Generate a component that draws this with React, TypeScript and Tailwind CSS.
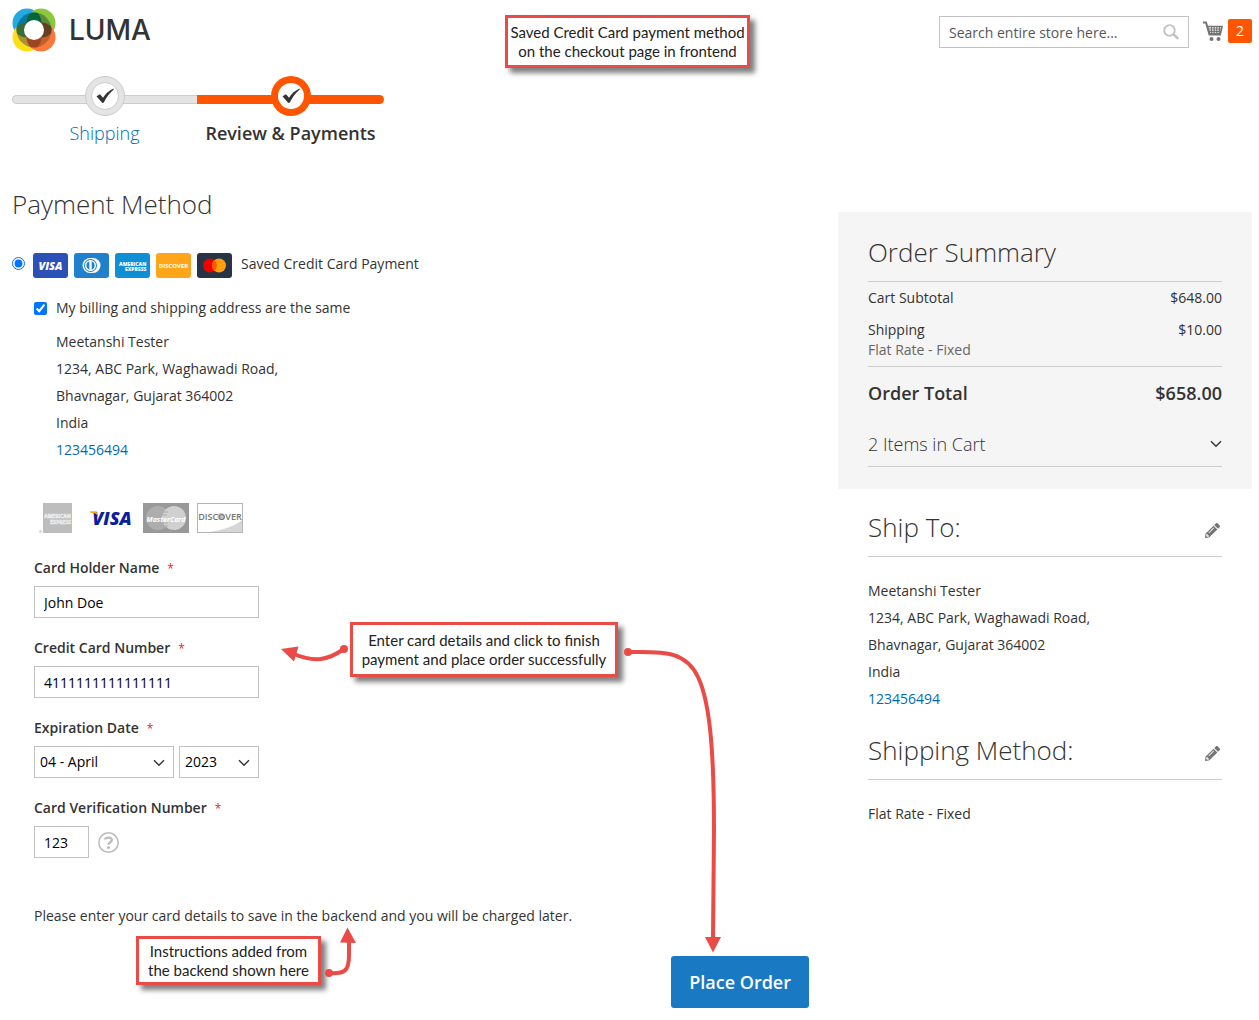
import React, { useState } from 'react';
import { FaPencilAlt } from 'react-icons/fa';

const address = ['Meetanshi Tester', '1234, ABC Park, Waghawadi Road,', 'Bhavnagar, Gujarat 364002', 'India'];

const months = [
  '01 - January', '02 - February', '03 - March', '04 - April', '05 - May', '06 - June',
  '07 - July', '08 - August', '09 - September', '10 - October', '11 - November', '12 - December',
];

const years = ['2022', '2023', '2024', '2025', '2026', '2027'];

const inputClass = 'h-8 border border-[#c2c2c2] bg-white px-[9px] text-sm text-black focus:outline-none';

const LumaLogo = () => (
  <a href="/" aria-label="Luma" className="flex items-center gap-[13px]">
    <svg width="44" height="44" viewBox="0 0 44 44">
      <defs>
        <clipPath id="core"><circle cx="22" cy="22" r="17.5" /></clipPath>
        <clipPath id="blue"><circle cx="15" cy="15" r="14.5" /></clipPath>
        <clipPath id="green"><circle cx="29" cy="15" r="14.5" /></clipPath>
        <clipPath id="yellow"><circle cx="15" cy="29" r="14.5" /></clipPath>
      </defs>
      <circle cx="15" cy="15" r="14.5" fill="#26a9e0" />
      <circle cx="29" cy="15" r="14.5" fill="#8dc63f" />
      <circle cx="15" cy="29" r="14.5" fill="#ffde17" />
      <circle cx="29" cy="29" r="14.5" fill="#f9793a" />
      <g clipPath="url(#core)">
        <rect x="0" y="0" width="22" height="22" fill="#0a7aa5" />
        <rect x="22" y="0" width="22" height="22" fill="#5a8a3c" />
        <rect x="0" y="22" width="22" height="22" fill="#a89234" />
        <rect x="22" y="22" width="22" height="22" fill="#c25f30" />
        <circle cx="29" cy="15" r="14.5" fill="#006838" clipPath="url(#blue)" />
        <circle cx="15" cy="29" r="14.5" fill="#3c6b35" clipPath="url(#blue)" />
        <circle cx="29" cy="29" r="14.5" fill="#64401f" clipPath="url(#green)" />
        <circle cx="29" cy="29" r="14.5" fill="#9e4420" clipPath="url(#yellow)" />
      </g>
      <circle cx="22" cy="22" r="10" fill="#fff" />
    </svg>
    <span className="font-[Inter,sans-serif] text-[28px] leading-8 font-medium text-[#333]">LUMA</span>
  </a>
);

const CartIcon = () => (
  <svg width="20" height="21" viewBox="0 0 20 21" fill="none" stroke="#757575">
    <path d="M0 1.5h3l3.500 12h11.500" strokeWidth="2" />
    <path d="M4.500 5.500h14.500l-1.500 7H6.500z" strokeWidth="1.600" />
    <path d="M5 8h14M6 10.300h12M8.500 5.500v7M11.200 5.500v7M13.800 5.500v7M16.400 5.500v7" strokeWidth="1.200" />
    <circle cx="8.500" cy="18" r="2" fill="#757575" stroke="none" />
    <circle cx="15.500" cy="18" r="2" fill="#757575" stroke="none" />
  </svg>
);

const Chevron = ({ className = '' }: { className?: string }) => (
  <svg className={className} width="12" height="8" viewBox="0 0 12 8" fill="none" stroke="#333" strokeWidth="1.400">
    <path d="M1 1.200l5 5 5-5" />
  </svg>
);

const Tick = () => (
  <svg width="18" height="16" viewBox="0 0 18 16" fill="#333">
    <path d="M.5 8.200l3.500-2 3 3.600C9.500 6 12.500 2.800 17.500.5L17.800 1.500C13.500 5 10.500 9 7.800 14.500L6.300 15z" />
  </svg>
);

const Step = ({ label, active }: { label: string; active?: boolean }) => (
  <li className={`relative pt-[19px] text-center ${active ? 'w-[187px]' : 'w-[185px]'}`}>
    <div
      className={
        active
          ? 'h-[9px] rounded-r-md bg-[#ff5501]'
          : 'h-[9px] rounded-l-md border border-r-0 border-[#ccc] bg-[#e4e4e4]'
      }
    />
    <span
      className={`absolute top-0 left-1/2 flex size-10 -translate-x-1/2 items-center justify-center rounded-full ${
        active ? 'bg-[#ff5501]' : 'border border-[#ccc] bg-[#e4e4e4]'
      }`}
    >
      <span
        className={`flex items-center justify-center rounded-full bg-white ${
          active ? 'size-[26px]' : 'size-7 border border-[#ccc]'
        }`}
      >
        <Tick />
      </span>
    </span>
    <div className="pt-[17px] text-lg leading-[25px]">
      {active ? (
        <span className="font-semibold">{label}</span>
      ) : (
        <a href="#shipping" className="font-light text-[#006bb4]">{label}</a>
      )}
    </div>
  </li>
);

const BrandCards = () => (
  <span className="flex gap-[6px]">
    <svg width="35" height="25" viewBox="0 0 35 25">
      <rect width="35" height="25" rx="3" fill="#2b50b8" />
      <text x="17.500" y="17" textAnchor="middle" fontFamily="Open Sans" fontSize="11" fontWeight="800" fontStyle="italic" fill="#fff">VISA</text>
    </svg>
    <svg width="35" height="25" viewBox="0 0 35 25">
      <rect width="35" height="25" rx="3" fill="#2180cc" />
      <path d="M16 5h3a7.500 7.500 0 0 1 0 15h-3a7.500 7.500 0 0 1 0-15z" fill="#fff" />
      <circle cx="16.500" cy="12.500" r="6.500" fill="#2180cc" />
      <circle cx="16.500" cy="12.500" r="5.500" fill="#fff" />
      <path d="M15.300 8.300a4.500 4.500 0 0 0 0 8.400zM17.700 8.300a4.500 4.500 0 0 1 0 8.400z" fill="#2180cc" />
    </svg>
    <svg width="35" height="25" viewBox="0 0 35 25">
      <rect width="35" height="25" rx="3" fill="#0f8fd6" />
      <text x="4" y="12.500" fontFamily="Open Sans" fontSize="5" fontWeight="800" fill="#fff">AMERICAN</text>
      <text x="10" y="17.500" fontFamily="Open Sans" fontSize="5" fontWeight="800" fill="#fff">EXPRESS</text>
    </svg>
    <svg width="35" height="25" viewBox="0 0 35 25">
      <rect width="35" height="25" rx="3" fill="#ffa51a" />
      <text x="17.500" y="14.500" textAnchor="middle" fontFamily="Open Sans" fontSize="6" fontWeight="700" fill="#fff">DISCOVER</text>
    </svg>
    <svg width="35" height="25" viewBox="0 0 35 25">
      <rect width="35" height="25" rx="3" fill="#263445" />
      <circle cx="13" cy="12.500" r="7" fill="#f00000" />
      <circle cx="22" cy="12.500" r="7" fill="#ff9f0f" />
      <path d="M17.500 7.100a7 7 0 0 1 0 10.800 7 7 0 0 1 0-10.800z" fill="#ff5a00" />
    </svg>
  </span>
);

const AcceptedCards = () => (
  <ul className="flex gap-2">
    <li>
      <svg width="46" height="30" viewBox="0 0 46 30" role="img" aria-label="American Express">
        <rect x="8" width="29" height="30" fill="#bdbdbd" />
        <circle cx="5.500" cy="28.500" r="1.200" fill="#ccc" />
        <text x="22.500" y="15" textAnchor="middle" fontFamily="Open Sans" fontSize="5" fontWeight="700" fill="none" stroke="#f2f2f2" strokeWidth="0.500">AMERICAN</text>
        <text x="25.500" y="21" textAnchor="middle" fontFamily="Open Sans" fontSize="5" fontWeight="700" fill="none" stroke="#f2f2f2" strokeWidth="0.500">EXPRESS</text>
      </svg>
    </li>
    <li>
      <svg width="46" height="30" viewBox="0 0 46 30" role="img" aria-label="Visa">
        <path d="M1 8.500h6.500l2.500 7C8 12 5 9.800 1 9.200z" fill="#f7a823" />
        <text x="23" y="22" textAnchor="middle" fontFamily="Open Sans" fontSize="18" fontWeight="800" fontStyle="italic" fill="#0a1f9c">VISA</text>
        <path d="M1 8.500h6.500l1 3.500C6.500 10.300 4 9.500 1 9.200z" fill="#f7a823" />
      </svg>
    </li>
    <li>
      <svg width="46" height="30" viewBox="0 0 46 30" role="img" aria-label="MasterCard">
        <rect width="46" height="30" fill="#999" />
        <circle cx="15" cy="15" r="12" fill="#adadad" />
        <circle cx="31" cy="15" r="12" fill="#d0d0d0" />
        <path d="M19.500 9H25M19 12h5M19 20h6M20 23h5" stroke="#adadad" />
        <text x="23" y="18.500" textAnchor="middle" fontFamily="Open Sans" fontSize="7" fontWeight="700" fontStyle="italic" fill="#fff">MasterCard</text>
      </svg>
    </li>
    <li>
      <svg width="46" height="30" viewBox="0 0 46 30" role="img" aria-label="Discover">
        <rect x="0.500" y="0.500" width="45" height="29" fill="#fff" stroke="#b5b5b5" />
        <path d="M12 29c14-2 26-6 33-12v12z" fill="#d6d6d6" />
        <circle cx="24" cy="13.500" r="3.500" fill="#c4c4c4" />
        <text x="23" y="16.500" textAnchor="middle" fontFamily="Open Sans" fontSize="9" fontWeight="600" fill="#757575">DISCOVER</text>
      </svg>
    </li>
  </ul>
);

const Address = () => (
  <address className="leading-[27px] not-italic">
    {address.map((line) => (
      <div key={line}>{line}</div>
    ))}
    <a href="tel:123456494" className="text-[#006bb4]">123456494</a>
  </address>
);

const Label = ({ htmlFor, children }: { htmlFor: string; children: React.ReactNode }) => (
  <label htmlFor={htmlFor} className="mb-2 block leading-5 font-semibold">
    {children}
    <span className="ml-2 text-xs font-normal text-[#e02b27]">*</span>
  </label>
);

const Select = ({ id, label, value, options, onChange, className }: {
  id: string;
  label: string;
  value: string;
  options: string[];
  onChange: (value: string) => void;
  className: string;
}) => (
  <div className={`relative ${className}`}>
    <select
      id={id}
      aria-label={label}
      value={value}
      onChange={(e) => onChange(e.target.value)}
      className="h-8 w-full appearance-none border border-[#c2c2c2] bg-white pl-[5px] text-sm text-black"
    >
      {options.map((o) => (
        <option key={o}>{o}</option>
      ))}
    </select>
    <Chevron className="pointer-events-none absolute top-[13px] right-[9px]" />
  </div>
);

const SideBlock = ({ title, children }: { title: string; children: React.ReactNode }) => (
  <section>
    <div className="flex items-center justify-between border-b border-[#ccc] pb-[14px]">
      <h2 className="text-[26px] leading-[30px] font-light">{title}</h2>
      <button type="button" aria-label={`Edit ${title}`} className="mt-[6px] mr-[2px] text-[#757575]">
        <FaPencilAlt size={15} />
      </button>
    </div>
    <div className="pt-5 leading-[27px]">{children}</div>
  </section>
);

const Callout = ({ lines, className }: { lines: string[]; className: string }) => (
  <div
    className={`absolute flex flex-col justify-center border-[3px] border-[#ea4b46] bg-white text-center font-[Lato,sans-serif] text-[15px] leading-[19px] whitespace-nowrap text-[#222] shadow-[5px_5px_5px_rgba(0,0,0,0.5)] ${className}`}
  >
    {lines.map((line) => (
      <p key={line}>{line}</p>
    ))}
  </div>
);

const App: React.FC = () => {
  const [sameAddress, setSameAddress] = useState(true);
  const [name, setName] = useState('John Doe');
  const [cardNumber, setCardNumber] = useState('4111111111111111');
  const [month, setMonth] = useState('04 - April');
  const [year, setYear] = useState('2023');
  const [cvv, setCvv] = useState('123');

  return (
    <div className="relative min-h-screen bg-white pr-[7px] pb-3 pl-3 font-['Open_Sans',sans-serif] text-sm text-[#333]">
      {/* Header */}
      <header className="flex items-start justify-between pt-2">
        <LumaLogo />
        <div className="flex items-center pt-2">
          <form role="search" className="relative w-[250px]" onSubmit={(e) => e.preventDefault()}>
            <input
              type="search"
              aria-label="Search"
              placeholder="Search entire store here..."
              className={`w-full placeholder:text-[#575757] ${inputClass}`}
            />
            <button type="submit" aria-label="Search" className="absolute top-2 right-[10px]">
              <svg width="16" height="16" viewBox="0 0 16 16" fill="none" stroke="#c2c2c2" strokeWidth="1.800">
                <circle cx="6.500" cy="6.500" r="5.300" />
                <path d="M10.500 10.500l4.700 4.300" strokeWidth="2.500" />
              </svg>
            </button>
          </form>
          <a href="#cart" aria-label="Cart" className="mb-[2px] ml-[14px] flex items-center gap-[5px]">
            <CartIcon />
            <span className="flex size-6 items-center justify-center rounded-xs bg-[#ff5501] text-white">2</span>
          </a>
        </div>
      </header>

      <ol className="flex pt-6">
        <Step label="Shipping" />
        <Step label="Review & Payments" active />
      </ol>

      <div className="flex items-start gap-[29px]">
        {/* Payment */}
        <main className="min-w-0 flex-1 pt-[43px]">
          <h1 className="text-[26px] leading-[30px] font-light">Payment Method</h1>
          <div className="mt-[34px] flex items-start gap-2">
            <input id="saved-cc" type="radio" name="method" defaultChecked className="mt-1 size-[13px] accent-[#0075ff]" />
            <label htmlFor="saved-cc" className="flex items-start gap-[9px] leading-[22px]">
              <BrandCards />
              Saved Credit Card Payment
            </label>
          </div>

          <div className="pl-[22px]">
            <div className="mt-5 flex items-center gap-[9px] leading-5">
              <input
                id="same-address"
                type="checkbox"
                checked={sameAddress}
                onChange={(e) => setSameAddress(e.target.checked)}
                className="size-[13px] accent-[#0075ff]"
              />
              <label htmlFor="same-address">My billing and shipping address are the same</label>
            </div>
            <div className="mt-[10px] pl-[22px]">
              <Address />
            </div>

            <div className="mt-10 pl-[1px]">
              <AcceptedCards />
            </div>

            <form id="card-form" className="mt-[25px] flex flex-col gap-5" onSubmit={(e) => e.preventDefault()}>
              <div>
                <Label htmlFor="holder">Card Holder Name</Label>
                <input id="holder" type="text" value={name} onChange={(e) => setName(e.target.value)} className={`w-[225px] ${inputClass}`} />
              </div>
              <div>
                <Label htmlFor="number">Credit Card Number</Label>
                <input id="number" type="text" value={cardNumber} onChange={(e) => setCardNumber(e.target.value)} className={`w-[225px] ${inputClass}`} />
              </div>
              <div>
                <Label htmlFor="month">Expiration Date</Label>
                <div className="flex gap-[5px]">
                  <Select id="month" label="Month" value={month} options={months} onChange={setMonth} className="w-[140px]" />
                  <Select id="year" label="Year" value={year} options={years} onChange={setYear} className="w-20" />
                </div>
              </div>
              <div>
                <Label htmlFor="cvv">Card Verification Number</Label>
                <div className="flex items-center gap-[9px]">
                  <input id="cvv" type="text" value={cvv} onChange={(e) => setCvv(e.target.value)} className={`w-[55px] ${inputClass}`} />
                  <button type="button" aria-label="What is this?">
                    <svg width="21" height="21" viewBox="0 0 21 21" fill="none" stroke="#bbb">
                      <circle cx="10.500" cy="10.500" r="9.700" strokeWidth="1.500" />
                      <path d="M7 7.500C7.600 5.300 13.800 4.500 13.800 8c0 2.300-3.200 2.300-3.200 4.800" strokeWidth="2.300" />
                      <circle cx="10.500" cy="15.500" r="1.500" fill="#bbb" stroke="none" />
                    </svg>
                  </button>
                </div>
              </div>
            </form>

            <p className="mt-12 leading-5">
              Please enter your card details to save in the backend and you will be charged later.
            </p>
            <div className="mt-[30px] flex justify-end">
              <button
                type="submit"
                form="card-form"
                className="h-[52px] rounded-[3px] bg-[#1979c3] px-[18px] text-lg font-semibold text-white"
              >
                Place Order
              </button>
            </div>
          </div>
        </main>

        {/* Sidebar */}
        <aside className="mt-[66px] w-[414px] shrink-0">
          <section className="bg-[#f5f5f5] px-[30px] pt-[25px] pb-[22px]">
            <h2 className="pb-[14px] text-[26px] leading-[30px] font-light">Order Summary</h2>
            <table className="w-full border-t border-[#ccc] leading-5">
              <tbody>
                <tr>
                  <th scope="row" className="py-[6px] text-left font-normal">Cart Subtotal</th>
                  <td className="py-[6px] text-right">$648.00</td>
                </tr>
                <tr className="border-b border-[#ccc] align-top">
                  <th scope="row" className="py-[6px] text-left font-normal">
                    Shipping
                    <span className="block text-[#666]">Flat Rate - Fixed</span>
                  </th>
                  <td className="py-[6px] text-right">$10.00</td>
                </tr>
                <tr className="text-lg leading-[26px] font-semibold">
                  <th scope="row" className="pt-[13px] text-left font-semibold">Order Total</th>
                  <td className="pt-[13px] text-right">$658.00</td>
                </tr>
              </tbody>
            </table>
            <button
              type="button"
              className="mt-[25px] flex w-full items-center justify-between border-b border-[#ccc] pb-[9px] text-lg leading-[26px] font-light"
            >
              2 Items in Cart
              <Chevron />
            </button>
          </section>

          <div className="flex flex-col gap-[23px] px-[30px] pt-[23px]">
            <SideBlock title="Ship To:">
              <Address />
            </SideBlock>
            <SideBlock title="Shipping Method:">Flat Rate - Fixed</SideBlock>
          </div>
        </aside>
      </div>

      {/* Callouts */}
      <Callout
        lines={['Saved Credit Card payment method', 'on the checkout page in frontend']}
        className="top-[15px] left-[505px] h-[53px] w-[245px]"
      />
      <Callout
        lines={['Enter card details and click to finish', 'payment and place order successfully']}
        className="top-[622px] left-[350px] h-[55px] w-[268px]"
      />
      <Callout
        lines={['Instructions added from', 'the backend shown here']}
        className="top-[936px] left-[136px] h-[49px] w-[185px]"
      />
      <svg className="pointer-events-none absolute top-[640px] left-[280px]" width="70" height="30" viewBox="280 640 70 30" fill="#ea4b46">
        <path d="M344 649C328 660 315 663 294 654" fill="none" stroke="#ea4b46" strokeWidth="4" />
        <circle cx="344" cy="649" r="4" />
        <path d="M281 649l17.500-2.500-4.500 15z" />
      </svg>
      <svg className="pointer-events-none absolute top-[640px] left-[620px]" width="110" height="320" viewBox="620 640 110 320" fill="#ea4b46">
        <path d="M628 652H640C665 652 686 652 698 677C711 704 714 760 714 830L713 938" fill="none" stroke="#ea4b46" strokeWidth="4" />
        <circle cx="628" cy="652" r="4" />
        <path d="M713 952.500l-8-15.500h16z" />
      </svg>
      <svg className="pointer-events-none absolute top-[920px] left-[320px]" width="45" height="60" viewBox="320 920 45 60" fill="#ea4b46">
        <path d="M329 973C345 974 349 971 349 955V942" fill="none" stroke="#ea4b46" strokeWidth="4" />
        <circle cx="329" cy="973" r="4" />
        <path d="M347.500 927.500L340 942.500l16 .5z" />
      </svg>
    </div>
  );
};

export default App;
